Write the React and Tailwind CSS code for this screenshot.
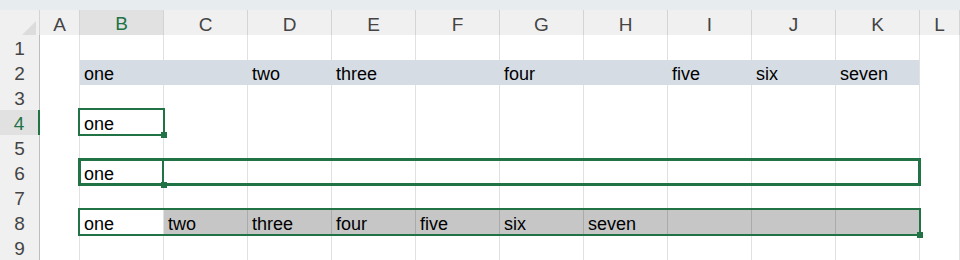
import React from 'react';

const COLS = ['A', 'B', 'C', 'D', 'E', 'F', 'G', 'H', 'I', 'J', 'K', 'L'];
const WIDE = ['B', 'C', 'D', 'E', 'F', 'G', 'H', 'I', 'J', 'K'];

// cell contents per row
const DATA = {
  2: { B: 'one', D: 'two', E: 'three', G: 'four', I: 'five', J: 'six', K: 'seven' },
  4: { B: 'one' },
  6: { B: 'one' },
  8: { B: 'one', C: 'two', D: 'three', E: 'four', F: 'five', G: 'six', H: 'seven' },
};

function cellClass(row, col) {
  const wide = WIDE.includes(col);
  if (row === 2 && wide) {
    return col === 'K'
      ? 'bg-[#d6dce4] border-r border-b border-r-[#e1e1e1] border-b-[#e1e1e1]'
      : 'bg-[#d6dce4] border-r border-b border-r-[#d6dce4] border-b-[#e1e1e1]';
  }
  if (row === 8 && wide && col !== 'B') {
    return 'bg-[#c6c6c6] border-r border-b border-r-[#ababab] border-b-[#e1e1e1]';
  }
  return 'bg-white border-r border-b border-[#e1e1e1]';
}

function HeaderRow() {
  return (
    <div className="grid grid-cols-[40px_40px_repeat(10,84px)_1fr] h-[25px]">
      <div className="flex items-end justify-end pr-[3px] pb-[3px] bg-[#f0f0f0] border-r border-b border-r-[#d4d4d4] border-b-[#bdbdbd]">
        <svg width="16" height="16" viewBox="0 0 16 16">
          <polygon points="16,0 16,16 0,16" fill="#dcdcdc" />
        </svg>
      </div>
      {COLS.map(c => (
        <div
          key={c}
          className={
            c === 'B'
              ? 'flex items-center justify-center bg-[#e1e1e1] border-r border-b-2 border-r-[#d4d4d4] border-b-[#217346] text-[#217346] text-[19px]'
              : 'flex items-center justify-center bg-[#f0f0f0] border-r border-b border-r-[#d4d4d4] border-b-[#bdbdbd] text-[#444] text-[19px]'
          }
        >
          {c}
        </div>
      ))}
    </div>
  );
}

function Row({ n }) {
  const sel = n === 4;
  return (
    <div className="grid grid-cols-[40px_40px_repeat(10,84px)_1fr] h-[25px]">
      <div
        className={
          sel
            ? 'flex items-center justify-center bg-[#e1e1e1] border-r-2 border-b border-r-[#217346] border-b-[#d4d4d4] text-[#217346] text-[19px]'
            : 'flex items-center justify-center bg-[#f0f0f0] border-r border-b border-r-[#bdbdbd] border-b-[#d4d4d4] text-[#444] text-[19px]'
        }
      >
        {n}
      </div>
      {COLS.map(c => (
        <div key={c} className={`flex items-center pl-[4px] pt-[1px] text-[18px] text-black whitespace-nowrap ${cellClass(n, c)}`}>
          {DATA[n]?.[c] ?? ''}
        </div>
      ))}
    </div>
  );
}

// selection outline drawn over the grid, with the fill handle at a corner
function Selection({ className, handle, children }) {
  return (
    <div className={`absolute border-[#217346] ${className}`}>
      {children}
      <div className={`absolute w-[6px] h-[6px] bg-[#217346] ${handle}`} />
    </div>
  );
}

export default function App() {
  return (
    <div className="relative w-[960px] h-[260px] overflow-hidden bg-white" style={{ fontFamily: '"Liberation Sans", Arial, sans-serif' }}>
      <div className="h-[10px] bg-[#e7ecef]" />
      <HeaderRow />
      {[1, 2, 3, 4, 5, 6, 7, 8, 9].map(n => <Row key={n} n={n} />)}

      <Selection className="left-[78px] top-[108px] w-[87px] h-[28px] border-2" handle="right-[-4px] bottom-[-4px]" />

      <Selection className="left-[78px] top-[158px] w-[843px] h-[28px] border-[3px]" handle="left-[80px] bottom-[-5px]">
        <div className="absolute left-[81px] top-0 w-[2px] h-full bg-[#217346]" />
      </Selection>

      <Selection className="left-[78px] top-[208px] w-[843px] h-[28px] border-2" handle="right-[-4px] bottom-[-4px]" />
    </div>
  );
}
